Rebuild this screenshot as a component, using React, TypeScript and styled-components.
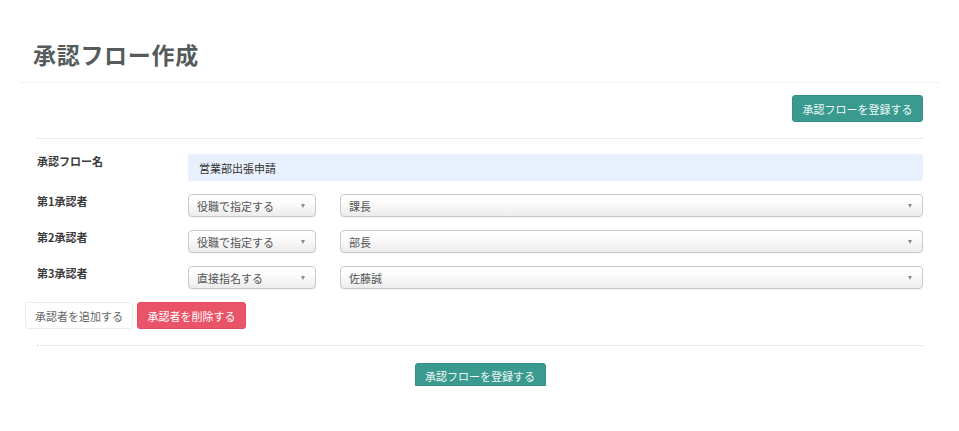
import React from "react";
import styled, { createGlobalStyle } from "styled-components";

const Global = createGlobalStyle`
  html, body { margin: 0; padding: 0; background: #fff; }
  body { font-family: "Noto Sans CJK JP", "Noto Sans", sans-serif; color: #333; }
  * { box-sizing: border-box; }
`;

const Page = styled.div`
  padding: 0 20px;
  width: 959px;
`;

const Header = styled.div`
  padding: 39px 13px 13px;
  border-bottom: 1px solid #f1f1f1;
`;

const Title = styled.h1`
  margin: 0;
  font-size: 23px;
  line-height: 30px;
  font-weight: 700;
  color: #555c5b;
  letter-spacing: 0.7px;
`;

const Content = styled.div`
  padding: 0 16px 0 17px;
`;

const Toolbar = styled.div<{ $center?: boolean }>`
  display: flex;
  justify-content: ${(p) => (p.$center ? "center" : "flex-end")};
  padding-top: ${(p) => (p.$center ? "17px" : "12px")};
  padding-bottom: ${(p) => (p.$center ? "0" : "16px")};
`;

const Button = styled.button<{ $variant: "primary" | "danger" | "default"; $cut?: boolean }>`
  font-family: inherit;
  font-size: 11px;
  white-space: nowrap;
  height: ${(p) => (p.$cut ? "23px" : "27px")};
  padding: ${(p) => (p.$cut ? "4px 0 0" : "0")};
  border-radius: ${(p) => (p.$cut ? "3px 3px 0 0" : "3px")};
  cursor: pointer;
  display: inline-flex;
  align-items: ${(p) => (p.$cut ? "flex-start" : "center")};
  justify-content: center;
  ${(p) =>
    p.$variant === "primary"
      ? `background: #3a9a8f; color: #eef9f7; border: 1px solid #359086;`
      : p.$variant === "danger"
      ? `background: #ea5469; color: #fff; border: 1px solid #e24d62;`
      : `background: #fff; color: #666; border: 1px solid #ececec;`}
`;

const Dotted = styled.div`
  border-top: 1px dotted #d8d8d8;
  height: 0;
`;

const Form = styled.div`
  display: flex;
  flex-direction: column;
  gap: 13px;
  padding-top: 15px;
`;

const Row = styled.div`
  display: grid;
  grid-template-columns: 151px 1fr;
  align-items: start;
`;

const Label = styled.div`
  font-size: 11px;
  font-weight: 700;
  color: #3a3a3a;
  line-height: 14px;
`;

const TextInput = styled.div`
  height: 27px;
  background: #e8f0fd;
  border-radius: 2px;
  font-size: 11px;
  color: #333;
  padding-left: 11px;
  display: flex;
  align-items: center;
`;

const Selects = styled.div`
  display: grid;
  grid-template-columns: 128px 1fr;
  gap: 24px;
`;

const Select = styled.div`
  height: 23px;
  border: 1px solid #c9c9c9;
  border-radius: 4px;
  background: linear-gradient(#ffffff 0%, #fbfbfb 40%, #ececec 100%);
  box-shadow: 0 1px 0 rgba(0,0,0,0.03);
  font-size: 11px;
  color: #555;
  padding: 0 10px 0 8px;
  display: flex;
  align-items: center;
  justify-content: space-between;
  white-space: nowrap;
`;

const Caret = styled.span`
  width: 0;
  height: 0;
  border-left: 2.5px solid transparent;
  border-right: 2.5px solid transparent;
  border-top: 4px solid #8a8a8a;
`;

const Actions = styled.div`
  display: flex;
  gap: 4px;
  margin-left: -12px;
  padding-bottom: 16px;
`;

const approvers = [
  { label: "第1承認者", type: "役職で指定する", value: "課長" },
  { label: "第2承認者", type: "役職で指定する", value: "部長" },
  { label: "第3承認者", type: "直接指名する", value: "佐藤誠" },
];

export default function App() {
  return (
    <Page>
      <Global />
      <Header>
        <Title>承認フロー作成</Title>
      </Header>
      <Content>
        <Toolbar>
          <Button $variant="primary" style={{ width: 131 }}>承認フローを登録する</Button>
        </Toolbar>
        <Dotted />
        <Form>
          <Row>
            <Label>承認フロー名</Label>
            <TextInput>営業部出張申請</TextInput>
          </Row>
          {approvers.map((a) => (
            <Row key={a.label}>
              <Label>{a.label}</Label>
              <Selects>
                <Select>
                  <span>{a.type}</span>
                  <Caret />
                </Select>
                <Select>
                  <span>{a.value}</span>
                  <Caret />
                </Select>
              </Selects>
            </Row>
          ))}
          <Actions>
            <Button $variant="default" style={{ width: 108 }}>承認者を追加する</Button>
            <Button $variant="danger" style={{ width: 109 }}>承認者を削除する</Button>
          </Actions>
        </Form>
        <Dotted />
        <Toolbar $center>
          <Button $variant="primary" $cut style={{ width: 131 }}>承認フローを登録する</Button>
        </Toolbar>
      </Content>
    </Page>
  );
}
